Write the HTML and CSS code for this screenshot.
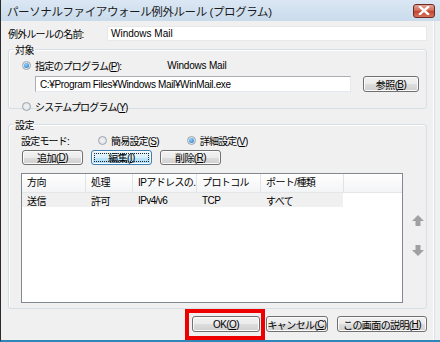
FILE: index.html
```html
<!DOCTYPE html>
<html lang="ja">
<head>
    <meta charset="UTF-8">
    <title>パーソナルファイアウォール例外ルール (プログラム)</title>
    <link rel="stylesheet" href="styles.css">
</head>
<body>
    <div class="window">
        <!-- Barre de titre -->
        <div class="titlebar">
            <span class="title">パーソナルファイアウォール例外ルール (プログラム)</span>
            <span class="close-btn">
                <svg width="12" height="9" viewBox="0 0 12 9">
                    <path d="M2 1 L10 8 M10 1 L2 8" stroke="#fff" stroke-width="2.4" stroke-linecap="square"/>
                </svg>
            </span>
        </div>

        <div class="content">
            <div class="name-row">
                <label class="name-label">例外ルールの名前:</label>
                <div class="textbox name-input">Windows Mail</div>
            </div>

            <!-- Groupe cible -->
            <fieldset class="group group-target">
                <legend>対象</legend>
                <div class="radio-row">
                    <span class="radio on"></span>
                    <span class="radio-text">指定のプログラム(<u>P</u>):</span>
                    <span class="prog-name">Windows Mail</span>
                </div>
                <div class="path-row">
                    <div class="textbox path-input">C:¥Program Files¥Windows Mail¥WinMail.exe</div>
                    <span class="btn browse-btn">参照(<u>B</u>)</span>
                </div>
                <div class="radio-row system-row">
                    <span class="radio"></span>
                    <span class="radio-text">システムプログラム(<u>Y</u>)</span>
                </div>
            </fieldset>

            <!-- Groupe réglages -->
            <fieldset class="group group-settings">
                <legend>設定</legend>
                <div class="mode-row">
                    <span class="mode-label">設定モード:</span>
                    <span class="radio"></span>
                    <span class="radio-text mode-simple">簡易設定(<u>S</u>)</span>
                    <span class="radio on"></span>
                    <span class="radio-text">詳細設定(<u>V</u>)</span>
                </div>
                <div class="action-row">
                    <span class="btn action-btn">追加(<u>D</u>)</span>
                    <span class="btn action-btn focused">編集(<u>I</u>)</span>
                    <span class="btn action-btn">削除(<u>R</u>)</span>
                </div>
                <div class="list-area">
                    <div class="listview">
                        <div class="list-row list-head">
                            <span>方向</span>
                            <span>処理</span>
                            <span>IPアドレスの..</span>
                            <span>プロトコル</span>
                            <span>ポート/種類</span>
                        </div>
                        <div class="list-row list-item">
                            <span>送信</span>
                            <span>許可</span>
                            <span>IPv4/v6</span>
                            <span>TCP</span>
                            <span>すべて</span>
                        </div>
                    </div>
                    <div class="arrows">
                        <svg width="12" height="12" viewBox="0 0 12 12">
                            <path d="M6 0 L12 6 L8.5 6 L8.5 11 L3.5 11 L3.5 6 L0 6 Z" fill="#a0a0a0"/>
                        </svg>
                        <svg width="12" height="12" viewBox="0 0 12 12">
                            <path d="M6 12 L12 6 L8.5 6 L8.5 1 L3.5 1 L3.5 6 L0 6 Z" fill="#a0a0a0"/>
                        </svg>
                    </div>
                </div>
            </fieldset>

            <!-- Boutons du bas -->
            <div class="footer">
                <span class="ok-wrap"><span class="btn footer-btn ok-btn">OK(<u>O</u>)</span></span>
                <span class="btn footer-btn cancel-btn">キャンセル(<u>C</u>)</span>
                <span class="btn footer-btn help-btn">この画面の説明(<u>H</u>)</span>
            </div>
        </div>
    </div>
</body>
</html>
```

FILE: styles.css
```css
body {
    margin: 0;
    font-family: "Liberation Sans", "Noto Sans CJK JP", sans-serif;
    font-size: 10px;
    color: #000;
    background-color: #f0f0f0;
}

.window {
    width: 440px;
    height: 342px;
    box-sizing: border-box;
    display: flex;
    flex-direction: column;
    border-left: 1px solid #2b2b2b;
    border-bottom: 2px solid #2f86b8;
    overflow: hidden;
}

/* Barre de titre */
.titlebar {
    height: 21px;
    flex: none;
    display: flex;
    align-items: center;
    justify-content: space-between;
    padding: 0 5px 0 6px;
    background: linear-gradient(#dbe7f3, #c9dbec);
}

.title {
    font-size: 11.5px;
    letter-spacing: -0.4px;
    color: #1b1b1b;
}

.close-btn {
    width: 22px;
    height: 14px;
    box-sizing: border-box;
    display: flex;
    align-items: center;
    justify-content: center;
    border: 1px solid #6d2a22;
    border-radius: 3px;
    background: linear-gradient(#e6a598, #d0634f 50%, #c2402b 51%, #d9735f);
}

.content {
    flex: 1;
    display: flex;
    flex-direction: column;
    padding: 5px 7px 0 7px;
    border-right: 1px solid #d6e4ea;
    box-shadow: inset -1px 0 0 #fff;
    margin-right: 5px;
}

.name-row {
    display: flex;
    align-items: center;
    height: 15px;
}

.name-label {
    width: 99px;
    letter-spacing: -0.8px;
}

.textbox {
    height: 15px;
    box-sizing: border-box;
    background: #fff;
    border: 1px solid #abadb3;
    border-right-color: #e3e9ef;
    border-bottom-color: #e3e9ef;
    display: flex;
    align-items: center;
    padding-left: 3px;
    white-space: nowrap;
    overflow: hidden;
}

.name-input {
    flex: 1;
    border-color: #e8e8e8;
}

/* Groupes */
.group {
    margin: 1px 0 0 0;
    padding: 0;
    border: 1px solid #d5dfe5;
    border-radius: 3px;
    box-shadow: inset 1px 1px 0 #fff;
}

.group legend {
    padding: 0 1px;
    margin-left: 5px;
    letter-spacing: -0.5px;
}

.group-target {
    height: 67px;
    box-sizing: border-box;
}

.radio-row {
    display: flex;
    align-items: center;
    height: 12px;
    margin-left: 13px;
    margin-top: 2px;
}

.radio {
    width: 9px;
    height: 9px;
    box-sizing: border-box;
    border-radius: 50%;
    border: 1px solid #9aa4ad;
    background: radial-gradient(circle, #f4f4f4, #d9dde2);
    position: relative;
    flex: none;
}

.radio.on::after {
    content: "";
    position: absolute;
    left: 1px;
    top: 1px;
    width: 5px;
    height: 5px;
    border-radius: 50%;
    background: radial-gradient(circle at 40% 35%, #8fd3ff, #1a6fc2);
}

.radio-text {
    margin-left: 4px;
    letter-spacing: -0.8px;
}

.prog-name {
    margin-left: 46px;
    letter-spacing: -0.2px;
}

.path-row {
    display: flex;
    align-items: center;
    margin: 5px 0 0 26px;
}

.path-input {
    width: 316px;
    height: 16px;
    padding-left: 4px;
    letter-spacing: -0.35px;
}

.btn {
    height: 16px;
    box-sizing: border-box;
    display: flex;
    align-items: center;
    justify-content: center;
    border: 1px solid #707070;
    border-radius: 3px;
    background: linear-gradient(#f2f2f2 0%, #ebebeb 50%, #dddddd 51%, #cfcfcf 100%);
    box-shadow: inset 0 0 0 1px #fbfbfb;
    letter-spacing: -0.6px;
    white-space: nowrap;
    position: relative;
}

.browse-btn {
    width: 56px;
    margin-left: 12px;
}

.system-row {
    margin-top: 8px;
}

.group-settings {
    margin-top: 8px;
    flex: none;
    height: 192px;
    box-sizing: border-box;
}

.mode-row {
    display: flex;
    align-items: center;
    height: 12px;
    margin: 2px 0 0 12px;
}

.mode-label {
    width: 77px;
    letter-spacing: -0.8px;
}

.mode-simple {
    margin-right: 28px;
}

.action-row {
    display: flex;
    gap: 8px;
    margin: 4px 0 0 13px;
}

.action-btn {
    width: 61px;
    height: 15px;
}

.action-btn.focused {
    border-color: #3c7fb1;
    background: linear-gradient(#eaf6fd 0%, #d9f0fc 50%, #bee6fd 51%, #a7d9f5 100%);
}

.action-btn.focused::before {
    content: "";
    position: absolute;
    left: 2px;
    top: 2px;
    right: 2px;
    bottom: 2px;
    border: 1px dotted #222;
}

/* Liste */
.list-area {
    display: flex;
    margin: 8px 0 0 12px;
}

.listview {
    width: 382px;
    height: 130px;
    box-sizing: border-box;
    border: 1px solid #828790;
    background: #fff;
}

.list-row {
    display: grid;
    grid-template-columns: 64px 47px 64px 64px 83px;
    align-items: center;
}

.list-row span {
    padding-left: 5px;
    white-space: nowrap;
    overflow: hidden;
    letter-spacing: -0.6px;
}

.list-head {
    height: 18px;
    background: linear-gradient(#ffffff, #f3f4f6);
    border-bottom: 1px solid #e5e6e8;
}

.list-head span {
    border-right: 1px solid #e2e3e5;
    height: 18px;
    line-height: 18px;
}

.list-item {
    height: 14px;
    width: 321px;
    background: #f0f0f0;
}

.arrows {
    display: flex;
    flex-direction: column;
    gap: 17px;
    margin: 42px 0 0 9px;
}

/* Boutons du bas */
.footer {
    display: flex;
    margin: 7px 0 0 184px;
    align-items: center;
}

.footer-btn {
    height: 16px;
}

.ok-wrap {
    position: relative;
}

.ok-wrap::after {
    content: "";
    position: absolute;
    left: -7px;
    top: -7px;
    right: -5px;
    bottom: -8px;
    border: 4px solid #ee0000;
}

.ok-btn {
    width: 68px;
}

.cancel-btn {
    width: 64px;
    margin-left: 6px;
}

.help-btn {
    width: 93px;
    margin-left: 9px;
}
```
